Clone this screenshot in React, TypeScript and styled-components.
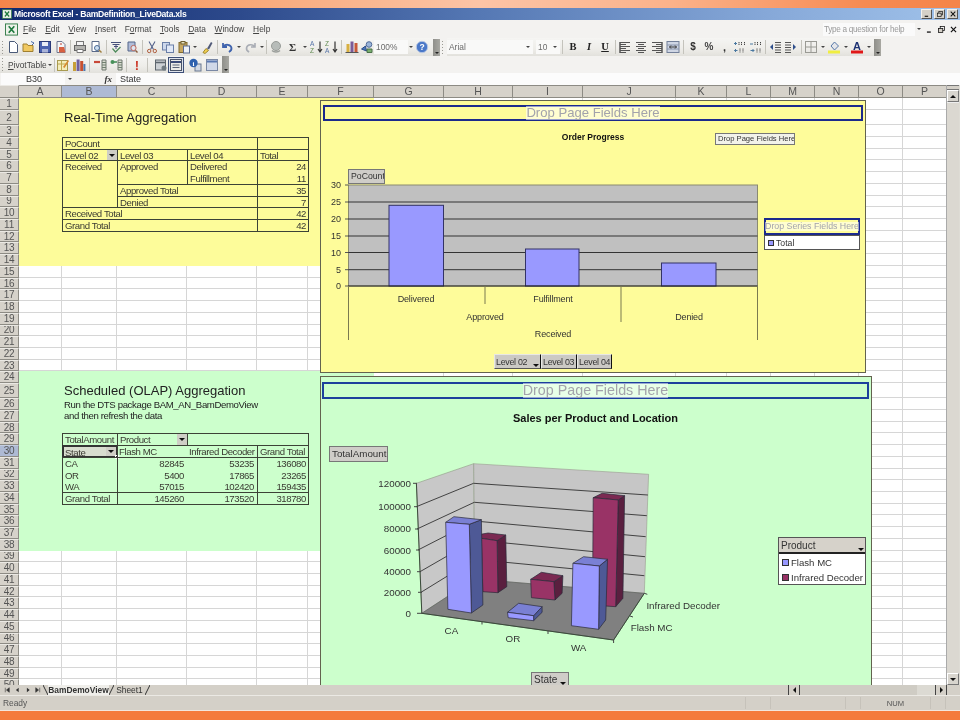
import React from "react";
import styled, { createGlobalStyle } from "styled-components";

const Global = createGlobalStyle`
  html, body { margin: 0; padding: 0; width: 960px; height: 720px; overflow: hidden; background: #f47b3c; }
  #root { width: 960px; height: 720px; }
  * { box-sizing: border-box; }
`;

const FONT = `"Liberation Sans", Arial, sans-serif`;

const colW = [43, 55, 70, 70, 51, 66, 70, 69, 70, 93, 51, 44, 44, 44, 44, 44];
const colN = "ABCDEFGHIJKLMNOP".split("");
const rowH = (n: number) => (n === 1 ? 12 : n === 2 ? 15.3 : n === 25 ? 15.1 : 11.72);
const rows = Array.from({ length: 50 }, (_, i) => i + 1);
const gridCols = `19px ${colW.map((w) => w + "px").join(" ")}`;
const gridRows = `13px ${rows.map((r) => rowH(r) + "px").join(" ")}`;

const Page = styled.div`
  width: 960px; height: 720px; display: flex; flex-direction: column;
  font-family: ${FONT}; color: #222; background: #d4d0c8; overflow: hidden; filter: blur(0.3px);
`;
const TopStrip = styled.div`
  height: 8px; flex: none;
  background: linear-gradient(90deg, #f3854a 0%, #f8a878 25%, #fcc4a6 50%, #fbb28a 70%, #f68b52 90%, #f58449 100%);
`;
const BottomStrip = styled.div`
  height: 10px; flex: none; background: #f47a3b; border-top: 1px solid #f2e6dc;
`;
const TitleBar = styled.div`
  height: 12px; flex: none; display: flex; align-items: center; padding: 0 2px;
  background: linear-gradient(90deg, #10296e 0%, #2d4a8c 25%, #5578b4 50%, #86a8d8 80%, #a0c2ea 100%);
  color: #fff; font-weight: bold; font-size: 8.6px; letter-spacing: -0.27px; gap: 2px;
`;
const TitleText = styled.span`flex: 1; white-space: nowrap;`;
const WinBtn = styled.span`
  width: 11px; height: 10px; flex: none; background: #d4d0c8; display: flex; align-items: center; justify-content: center;
  border: 1px solid; border-color: #f4f2ee #555 #555 #f4f2ee; margin-right: 0;
`;
const MenuBar = styled.div`
  height: 18px; flex: none; display: flex; align-items: center; background: #f3f2f0; padding-left: 5px; font-size: 8.4px; color: #444;
`;
const MenuList = styled.div`display: flex; gap: 8.7px; margin-left: 5px;`;
const Mnemonic = styled.span`text-decoration: underline;`;
const HelpBox = styled.div`
  margin-left: auto; width: 92px; height: 13px; background: #fafafa; color: #9a9a9a; font-size: 8.2px; letter-spacing: -0.3px; line-height: 13px; padding-left: 1px; white-space: nowrap;
`;
const DocBtns = styled.div`display: flex; align-items: center; width: 45px; gap: 0; padding-left: 0;`;
const DocSlot = styled.span`width: 12px; display: flex; justify-content: center;`;
const ToolRow = styled.div<{ $h: number }>`
  height: ${(p) => p.$h}px; flex: none; display: flex; align-items: center; background: #f3f2f0;
`;
const ToolGroup = styled.div`
  height: 100%; display: flex; align-items: center;
  background: linear-gradient(180deg, #f5f5f3 0%, #eeede9 60%, #e2e1dc 100%);
`;
const Gripper = styled.span<{ $w?: number }>`
  width: ${(p) => p.$w ?? 5}px; height: 13px; flex: none;
  background: repeating-linear-gradient(180deg, #9a9a94 0 1px, transparent 1px 3px) 2px 0 / 1px 100% no-repeat;
`;
const Slot = styled.span<{ $w: number }>`
  width: ${(p) => p.$w}px; height: 16px; flex: none; display: flex; align-items: center; justify-content: center;
`;
const Hot = styled(Slot)`
  height: 16px; background: #dfe3ea; border: 1px solid #3d4f78;
`;
const Sep = styled.span<{ $w?: number }>`
  width: ${(p) => p.$w ?? 4}px; height: 14px; flex: none; display: flex; justify-content: center;
  &::after { content: ""; width: 1px; height: 100%; background: #c4c3bc; }
`;
const Caret = styled.span<{ $w?: number }>`
  width: ${(p) => p.$w ?? 8}px; height: 16px; flex: none; display: flex; align-items: center; justify-content: center;
  &::after { content: ""; border: 2px solid transparent; border-top: 2.5px solid #444; border-bottom: 0; }
`;
const Overflow = styled.span<{ $ml?: number }>`
  width: 7px; height: 17px; flex: none; margin-left: ${(p) => p.$ml ?? 0}px; display: flex; align-items: flex-end; justify-content: center; padding-bottom: 2px;
  background: linear-gradient(90deg, #8f8f8a, #a8a8a2); 
  &::after { content: ""; border: 2px solid transparent; border-top: 2.5px solid #222; border-bottom: 0; }
`;
const Field = styled.span<{ $w: number }>`
  width: ${(p) => p.$w}px; height: 14px; flex: none; display: flex; align-items: center; justify-content: space-between; padding: 0 1px 0 2px;
  background: #f9f9f8; color: #6b6b6b; font-size: 8.4px;
`;
const GlyphText = styled.span<{ $c?: string; $s?: number; $serif?: boolean; $b?: boolean; $i?: boolean; $u?: boolean }>`
  font-family: ${(p) => (p.$serif ? `"Liberation Serif", serif` : FONT)};
  font-size: ${(p) => p.$s ?? 10}px; color: ${(p) => p.$c ?? "#333"};
  font-weight: ${(p) => (p.$b ? "bold" : "normal")}; font-style: ${(p) => (p.$i ? "italic" : "normal")};
  text-decoration: ${(p) => (p.$u ? "underline" : "none")}; line-height: 1;
`;
const PivotMenu = styled.span`
  font-size: 8.4px; color: #444; display: flex; align-items: center; width: 46px; padding-left: 3px; white-space: nowrap;
`;
const FormulaBar = styled.div`
  height: 12px; flex: none; display: flex; align-items: center; background: #f3f2f0; font-size: 9px; color: #333;
`;
const NameBox = styled.div`
  width: 64px; height: 12px; background: #fbfbfb; padding-left: 25px; line-height: 12px; margin-left: 1px;
`;
const NameCaret = styled(Caret)`height: 12px; margin-left: 1px;`;
const Fx = styled.span`
  width: 42px; text-align: right; padding-right: 4px; font-family: "Liberation Serif", serif; font-style: italic; font-weight: bold; font-size: 9px;
`;
const FormulaInput = styled.div`
  flex: 1; height: 12px; background: #fcfcfc; padding-left: 4px; line-height: 12px;
`;
const SheetArea = styled.div`flex: 1; display: flex; min-height: 0;`;
const Sheet = styled.div`width: 947px; height: 600px; position: relative; overflow: hidden; background: #fff;`;
const BaseGrid = styled.div`
  display: grid; grid-template-columns: ${gridCols}; grid-template-rows: ${gridRows};
`;
const OverGrid = styled(BaseGrid)`position: absolute; left: 0; top: 0;`;
const Head = styled.div<{ $sel?: boolean }>`
  background: ${(p) => (p.$sel ? "#aebad4" : "#d6d2ca")};
  border-right: 1px solid #8d8b84; border-bottom: 1px solid #8d8b84; border-top: 1px solid ${(p) => (p.$sel ? "#c4cde0" : "#ebe9e4")};
  color: #555; font-size: 10px; letter-spacing: -0.3px; display: flex; align-items: center; justify-content: center; overflow: hidden; line-height: 1;
`;
const ColHead = styled(Head)`font-size: 10.5px; letter-spacing: 0; border-top-color: #8d8b84;`;
const tones = { w: "#fff", y: "#fdfc9a", g: "#ccffcc" };
const Cell = styled.div<{ $t: "w" | "y" | "g" }>`
  background: ${(p) => tones[p.$t]};
  ${(p) => (p.$t === "w" ? "border-right: 1px solid #d6d6d6; border-bottom: 1px solid #d6d6d6;" : "")}
`;
const SheetText = styled.div<{ $c: number; $r: number; $s: number; $ls?: number }>`
  grid-column: ${(p) => p.$c}; grid-row: ${(p) => p.$r + 1}; font-size: ${(p) => p.$s}px; letter-spacing: ${(p) => p.$ls ?? 0}px;
  white-space: nowrap; padding-left: 2px; display: flex; align-items: center; color: #222;
`;
const PBox = styled.div<{ $a: string; $right?: boolean; $sel?: boolean; $plain?: boolean }>`
  grid-area: ${(p) => p.$a}; position: relative; white-space: pre;
  border: ${(p) => (p.$plain ? "0" : p.$sel ? "2px solid #333" : "1px solid #3c4236")};
  margin: 0 ${(p) => (p.$plain ? 0 : -1)}px ${(p) => (p.$plain ? 0 : -1)}px 0;
  padding: ${(p) => (p.$sel ? "0 1px" : p.$plain ? "1px 3px 0 2px" : "0 2px")};
  font-size: 9.6px; letter-spacing: -0.4px; line-height: 11.72px; color: #3a3a32; text-align: ${(p) => (p.$right ? "right" : "left")};
  overflow: visible; ${(p) => (p.$sel ? "background: #d8ddcf;" : "")}
`;
const PDrop = styled.span`
  position: absolute; right: 0; top: 0; bottom: 0; width: 10px; background: #cfcfc6; display: flex; align-items: center; justify-content: center;
  &::after { content: ""; border: 3px solid transparent; border-top: 3.5px solid #111; border-bottom: 0; }
`;
const FillHandle = styled.span`
  position: absolute; right: -3px; bottom: -3px; width: 4px; height: 4px; background: #333; border: 1px solid #fff;
`;
const ChartFrame = styled.div<{ $x: number; $y: number; $w: number; $h: number; $bg: string }>`
  position: absolute; left: ${(p) => p.$x}px; top: ${(p) => p.$y}px; width: ${(p) => p.$w}px; height: ${(p) => p.$h}px;
  background: ${(p) => p.$bg}; border: 1px solid #63634f;
`;
const ChartSvg = styled.svg`display: block; width: 100%; height: 100%;`;
const DropStrip = styled.div<{ $x: number; $y: number; $w: number; $h: number; $s: number; $line: string }>`
  position: absolute; left: ${(p) => p.$x}px; top: ${(p) => p.$y}px; width: ${(p) => p.$w}px; height: ${(p) => p.$h}px;
  border: 2px solid ${(p) => p.$line}; display: flex; align-items: center; justify-content: center;
  font-size: ${(p) => p.$s}px; color: #a3a3ab; white-space: nowrap; line-height: 1;
`;
const DropLabel = styled.span`background: rgba(255, 255, 255, 0.55);`;
const FieldBtn = styled.div<{ $x: number; $y: number; $w: number; $h: number; $s?: number; $bg?: string }>`
  position: absolute; left: ${(p) => p.$x}px; top: ${(p) => p.$y}px; width: ${(p) => p.$w}px; height: ${(p) => p.$h}px;
  background: ${(p) => p.$bg ?? "#cfcdc8"}; font-size: ${(p) => p.$s ?? 8.7}px; color: #333; white-space: nowrap;
  border: 1px solid; border-color: #eeeeea #333 #333 #eeeeea; outline: 1px solid #777; outline-offset: -1px;
  display: flex; align-items: center; justify-content: space-between; padding: 0 1px 0 2px; line-height: 1; overflow: hidden;
`;
const BtnCaret = styled.span`
  flex: none; width: 8px; height: 7px; align-self: flex-end; display: flex; align-items: flex-end; justify-content: center; margin-bottom: 1px;
  &::after { content: ""; border: 3px solid transparent; border-top: 3.5px solid #111; border-bottom: 0; }
`;
const BtnGroup = styled.div<{ $x: number; $y: number }>`
  position: absolute; left: ${(p) => p.$x}px; top: ${(p) => p.$y}px; display: flex; height: 15px;
`;
const GroupBtn = styled.div<{ $w: number }>`
  width: ${(p) => p.$w}px; height: 15px; background: #cbc9c4; font-size: 8.9px; letter-spacing: -0.3px; color: #333; border: 1px solid; border-color: #e8e8e4 #111 #555 #e8e8e4;
  display: flex; align-items: center; justify-content: space-between; padding: 0 0 0 1px; white-space: nowrap; overflow: hidden;
`;
const Legend = styled.div<{ $x: number; $y: number; $w: number }>`
  position: absolute; left: ${(p) => p.$x}px; top: ${(p) => p.$y}px; width: ${(p) => p.$w}px; background: #fff; border: 1px solid #555;
  display: flex; flex-direction: column; color: #333;
`;
const LegendHead = styled.div`
  height: 16px; background: #d6d2ca; border-bottom: 2px solid #222; font-size: 10px; display: flex; align-items: center; justify-content: space-between; padding-left: 2px;
`;
const LegendRow = styled.div<{ $h: number; $s: number }>`
  height: ${(p) => p.$h}px; display: flex; align-items: center; gap: 2px; padding-left: 3px; font-size: ${(p) => p.$s}px; white-space: nowrap;
`;
const Swatch = styled.span<{ $c: string; $z: number }>`
  width: ${(p) => p.$z}px; height: ${(p) => p.$z}px; background: ${(p) => p.$c}; border: 1px solid #333; flex: none;
`;
const VScroll = styled.div`
  flex: 1; height: 600px; display: flex; flex-direction: column; background: #dedcd5; padding-right: 1px; border-left: 1px solid #aaa;
`;
const Splitter = styled.div`height: 5px; background: #d4d0c8; border-top: 1px solid #777; border-bottom: 1px solid #777;`;
const ScrollBtn = styled.div<{ $up?: boolean }>`
  width: 12px; height: 12px; flex: none; background: #d8d5ce; border: 1px solid; border-color: #fff #777 #777 #fff; display: flex; align-items: center; justify-content: center;
  &::after { content: ""; border: 3px solid transparent; ${(p) => (p.$up ? "border-bottom: 3.5px solid #111; border-top: 0;" : "border-top: 3.5px solid #111; border-bottom: 0;")} }
`;
const Thumb = styled.div`flex: 1; background: #dbd8d1; border-top: 1px solid #eee;`;
const TabBar = styled.div`
  height: 11px; flex: none; display: flex; align-items: center; background: #d4d0c8; font-size: 8.4px; border-bottom: 1px solid #ebe9e4;
`;
const TabNav = styled.div`display: flex; width: 43px; padding-left: 2px; gap: 0;`;
const NavBtn = styled.span`width: 10.4px; display: flex; justify-content: center;`;
const Tab = styled.div<{ $active?: boolean; $w: number }>`
  width: ${(p) => p.$w}px; height: 10px; display: flex; align-items: center; justify-content: center; white-space: nowrap;
  font-weight: ${(p) => (p.$active ? "bold" : "normal")}; color: #333; background: ${(p) => (p.$active ? "#efeeea" : "transparent")};
`;
const HScroll = styled.div`margin-left: auto; width: 172px; display: flex; align-items: center; height: 10px;`;
const HBtn = styled.div<{ $left?: boolean }>`
  width: 12px; height: 10px; flex: none; display: flex; align-items: center; justify-content: center; border-left: 1px solid #444; border-right: 1px solid #444;
  &::after { content: ""; border: 3px solid transparent; ${(p) => (p.$left ? "border-right: 3.5px solid #111; border-left: 0;" : "border-left: 3.5px solid #111; border-right: 0;")} }
`;
const HTrack = styled.div<{ $w: number; $bg: string }>`width: ${(p) => p.$w}px; height: 10px; background: ${(p) => p.$bg}; flex: none;`;
const StatusBar = styled.div`
  height: 14px; flex: none; display: flex; align-items: center; background: #d4d0c8; color: #555; font-size: 8.4px; padding-left: 3px;
`;
const StatusCell = styled.span<{ $w: number }>`
  width: ${(p) => p.$w}px; height: 12px; border-left: 1px solid #c6c2ba; flex: none; display: flex; align-items: center; justify-content: center; font-size: 7.6px;
`;
const StatusText = styled.span`flex: 1;`;

const S = ({ children, w = 14, h = 14 }: { children: React.ReactNode; w?: number; h?: number }) => (
  <svg width={w} height={h} viewBox="0 0 14 14" fill="none">{children}</svg>
);
const lines = (ys: number[], x1: number, x2: number, c = "#555") =>
  ys.map((y) => <path key={y} d={`M${x1} ${y}H${x2}`} stroke={c} />);

const icons: Record<string, React.ReactNode> = {
  new: <path d="M3.5 1.5h5l3 3v8h-8z" fill="#fff" stroke="#4a5a78" />,
  open: <><path d="M1 11.5V4h4l1 1.5h5v6z" fill="#f0c860" stroke="#a08030" /><path d="M9 1.5l3 1.5-2 2" stroke="#4a6aa8" /></>,
  save: <><rect x="1.5" y="1.5" width="11" height="11" fill="#4a62b0" stroke="#2a3a78" /><rect x="4" y="2" width="6" height="4" fill="#e8ecf6" /><rect x="4" y="9" width="6" height="3.5" fill="#aab4d8" /></>,
  perm: <><path d="M3 1.5h5l3 3v8H3z" fill="#f6f6f6" stroke="#707890" /><path d="M5 7h5l1.5 5.5H5z" fill="#d86040" /><path d="M6 4h2" stroke="#c04030" /></>,
  print: <><rect x="3.5" y="1.5" width="7" height="4" fill="#f4f4f4" stroke="#777" /><rect x="1.5" y="5.5" width="11" height="5" fill="#b4b4b0" stroke="#666" /><path d="M4 9.5h6v3H4z" fill="#fff" stroke="#777" /></>,
  preview: <><path d="M3 1.5h7v10H3z" fill="#fff" stroke="#5a6a88" /><circle cx="8" cy="8" r="2.5" fill="#cfe0f0" stroke="#4a6a98" /><path d="M10 10l2.5 2.5" stroke="#a08040" strokeWidth="1.4" /></>,
  spell: <><path d="M2 2.5h10M3.5 4.5h7M5 6.5h4" stroke="#46507a" strokeWidth="1.2" /><path d="M7 4v5" stroke="#46507a" /><path d="M3.5 8.5l3 3.5 5-5" stroke="#4d8a5a" strokeWidth="1.2" /></>,
  research: <><path d="M3 2h7v9H3z" fill="#b0bcd8" stroke="#55668a" /><circle cx="8.5" cy="8" r="2.6" fill="#dfe6f2" stroke="#c0685a" /><path d="M10.5 10.5l2 2" stroke="#8a5a3a" strokeWidth="1.4" /></>,
  cut: <><path d="M4 1.5l4.5 8M10 1.5L5.5 9.5" stroke="#52608a" strokeWidth="1.1" /><circle cx="4.2" cy="11" r="1.7" stroke="#b06040" /><circle cx="9.8" cy="11" r="1.7" stroke="#b06040" /></>,
  copy: <><rect x="1.5" y="2.5" width="7" height="7.5" fill="#cdd8ec" stroke="#6a7fa8" /><rect x="5.5" y="5" width="7" height="7.5" fill="#e0e8f6" stroke="#6a7fa8" /></>,
  paste: <><rect x="2" y="2.5" width="8" height="10" fill="#c8a860" stroke="#806a30" /><rect x="4" y="1.5" width="4" height="2.5" fill="#e8e0c0" stroke="#706030" /><rect x="6.5" y="6" width="6" height="7" fill="#eef2f8" stroke="#5a6a90" /></>,
  painter: <><path d="M3 12.5l3-4 2.5 2-3.5 3z" fill="#f0cf50" stroke="#a08830" /><path d="M7 8.5l4-6.5 1.5 1-3.5 6.5z" fill="#505a78" /></>,
  undo: <path d="M3 3v4h4M3.4 6.6c2-2.8 7-2.4 8 1 .5 2-.8 3.5-2.5 4.4" stroke="#3f63ad" strokeWidth="1.8" />,
  redo: <path d="M11 3v4H7M10.6 6.6c-2-2.8-7-2.4-8 1-.5 2 .8 3.5 2.5 4.4" stroke="#a9adb5" strokeWidth="1.6" />,
  link: <><circle cx="7" cy="6" r="4.5" fill="#b7bcb9" stroke="#989c98" /><path d="M3 10.5c2 2 6 2 8 0" stroke="#9a9e9a" strokeWidth="1.6" /></>,
  sortA: <><text x="0" y="6.2" fontSize="6.5" fill="#5573a8" fontFamily="Liberation Sans">A</text><text x="0" y="13" fontSize="6.5" fill="#5f8a50" fontFamily="Liberation Sans">Z</text><path d="M10 1.5v10M8 9l2 3 2-3" stroke="#333" strokeWidth="1.2" /></>,
  sortD: <><text x="0" y="6.2" fontSize="6.5" fill="#5f8a50" fontFamily="Liberation Sans">Z</text><text x="0" y="13" fontSize="6.5" fill="#5573a8" fontFamily="Liberation Sans">A</text><path d="M10 1.5v10M8 9l2 3 2-3" stroke="#333" strokeWidth="1.2" /></>,
  chart: <><rect x="1.5" y="4" width="3" height="8.5" fill="#d8b040" /><rect x="5.5" y="1.5" width="3" height="11" fill="#7a5a98" /><rect x="9.5" y="3" width="3" height="9.5" fill="#c85838" /><path d="M0.5 12.5h13" stroke="#555" /></>,
  drawing: <><path d="M1.5 9l4-3 1 5z" fill="#4a78b8" stroke="#2a4a88" /><circle cx="9" cy="4.5" r="2.8" fill="#9ab4d8" stroke="#506a98" /><path d="M7 9h5v3.5H7z" fill="#7ab070" stroke="#4a7048" /></>,
  help: <><circle cx="7" cy="7" r="5.7" fill="#4a78c8" stroke="#b8c8e4" /><text x="7" y="10" textAnchor="middle" fontSize="8.5" fontWeight="bold" fill="#fff" fontFamily="Liberation Sans">?</text></>,
  wizard: <><rect x="1.5" y="2.5" width="10" height="10" fill="#f4eebc" stroke="#a89a50" /><path d="M2 6h9M5.5 3v9" stroke="#c0a850" /><path d="M7 9l5-7 1 1-4.5 7z" fill="#d88a30" /></>,
  pchart: <><rect x="1" y="4" width="3" height="9" fill="#c8a038" /><rect x="4.6" y="1.5" width="3" height="11.5" fill="#7060a0" /><rect x="8.2" y="3" width="3" height="10" fill="#c85030" /><rect x="11.4" y="6" width="2" height="7" fill="#4a78b0" /></>,
  hide: <><path d="M1 4h6" stroke="#c84838" strokeWidth="2.2" /><path d="M9 2h4v10H9z" fill="#d8dcd0" stroke="#707870" />{lines([4.5, 7, 9.5], 9, 13, "#708070")}</>,
  show: <><circle cx="3.5" cy="4" r="2" fill="#48905a" /><path d="M5 4h3" stroke="#48905a" strokeWidth="1.6" /><path d="M9 2h4v10H9z" fill="#d8dcd0" stroke="#707870" />{lines([4.5, 7, 9.5], 9, 13, "#708070")}</>,
  bang: <text x="7" y="12" textAnchor="middle" fontSize="13" fontWeight="bold" fill="#cc3a2a" fontFamily="Liberation Sans">!</text>,
  settings: <><rect x="1.5" y="2" width="10" height="10" fill="#ccd0d4" stroke="#5e666e" /><path d="M1.5 4.5h10" stroke="#5e666e" strokeWidth="1.5" /><circle cx="10" cy="10" r="2.5" fill="#707a80" /></>,
  table: <><rect x="1.5" y="1.5" width="11" height="11" fill="#eaeae6" stroke="#4a5468" /><path d="M2 4h10" stroke="#3a4a78" strokeWidth="2" /><path d="M3.5 7h7M3.5 9.5h7" stroke="#5a6478" /></>,
  info: <><rect x="7" y="6" width="6" height="7" fill="#d0d8e4" stroke="#6a7890" /><circle cx="5.5" cy="5" r="4.2" fill="#2f62ae" /><text x="5.5" y="7.8" textAnchor="middle" fontSize="7" fontWeight="bold" fill="#fff" fontFamily="Liberation Serif">i</text></>,
  window: <><rect x="1.5" y="1.5" width="11" height="11" fill="#d0d8e8" stroke="#7a88a4" /><path d="M2 3.5h10" stroke="#5a78b0" strokeWidth="2" /></>,
  alignL: <>{lines([2.5, 6.5, 10.5], 2, 12)}{lines([4.5, 8.5, 12.5], 2, 8)}<path d="M2 2v11" stroke="#555" strokeWidth="1.5" /></>,
  alignC: <>{lines([2.5, 6.5, 10.5], 2, 12)}{lines([4.5, 8.5, 12.5], 4, 10)}</>,
  alignR: <>{lines([2.5, 6.5, 10.5], 2, 12)}{lines([4.5, 8.5, 12.5], 6, 12)}<path d="M12 2v11" stroke="#555" strokeWidth="1.5" /></>,
  merge: <><rect x="1" y="1.5" width="12" height="11" fill="#cfd6e4" stroke="#73809a" /><path d="M1 5h12M1 9h12" stroke="#8a96ae" /><path d="M3.5 7h7M3.5 7l1.5-1.5M3.5 7l1.5 1.5M10.5 7L9 5.5M10.5 7L9 8.5" stroke="#333" /></>,
  incDec: <><path d="M1 3.5h3M2.5 2v3" stroke="#4a78a0" /><path d="M6 2v3.5M8.5 2v3.5M11.5 2v3.5" stroke="#444" strokeDasharray="1.2 .6" /><path d="M1.5 10.5h3M1.5 10.5L3 9M1.5 10.5L3 12" stroke="#4a78a0" /><path d="M7 8.5v4M10 8.5v4" stroke="#444" strokeDasharray="1.2 .6" /></>,
  decDec: <><path d="M6 2v3.5M8.5 2v3.5M11.5 2v3.5" stroke="#444" strokeDasharray="1.2 .6" /><path d="M1 4h3" stroke="#4a78a0" /><path d="M5 10.5H1.5M5 10.5L3.5 9M5 10.5L3.5 12" stroke="#4a78a0" /><path d="M8 8.5v4M11 8.5v4" stroke="#444" strokeDasharray="1.2 .6" /></>,
  outdent: <>{lines([2.5, 5, 7.5, 10, 12.5], 7, 13)}<path d="M5 4L2 7l3 3z" fill="#30508c" /></>,
  indent: <>{lines([2.5, 5, 7.5, 10, 12.5], 1, 7)}<path d="M9 4l3 3-3 3z" fill="#30508c" /></>,
  borders: <><rect x="1.5" y="1.5" width="11" height="11" stroke="#9a9a94" /><path d="M7 1.5v11M1.5 7h11" stroke="#9a9a94" /></>,
  fill: <><path d="M4 6l3.5-4 4 4-4 4z" fill="#e4e6ea" stroke="#5678a8" /><rect x="1" y="10.5" width="12" height="3" fill="#f0ee40" /></>,
  fontColor: <><text x="7" y="9.5" textAnchor="middle" fontSize="11" fontWeight="bold" fill="#1e3274" fontFamily="Liberation Sans">A</text><rect x="1" y="10.5" width="12" height="3" fill="#e01818" /></>,
  excel: <><rect x="0.5" y="1" width="13" height="12" fill="#eef2ea" stroke="#2f7a45" /><path d="M4 3.5l6 7M10 3.5l-6 7" stroke="#1f7a3f" strokeWidth="1.8" /></>,
  winMin: <path d="M3 11h6" stroke="#111" strokeWidth="2" />,
  winMax: <><rect x="5" y="2.5" width="6.5" height="6" stroke="#111" strokeWidth="1.2" /><rect x="2.5" y="5.5" width="6.5" height="6" fill="#d4d0c8" stroke="#111" strokeWidth="1.2" /></>,
  winClose: <path d="M3 3l8 8M11 3l-8 8" stroke="#111" strokeWidth="1.8" />,
  first: <path d="M4 3v8M11 3L6 7l5 4z" fill="#333" stroke="#333" />,
  prev: <path d="M10 3L5 7l5 4z" fill="#333" />,
  next: <path d="M5 3l5 4-5 4z" fill="#333" />,
  last: <path d="M10 3v8M3 3l5 4-5 4z" fill="#333" stroke="#333" />,
};

const Tool = ({ n, w = 16, size = 14 }: { n: string; w?: number; size?: number }) => (
  <Slot $w={w}><S w={size} h={size}>{icons[n]}</S></Slot>
);
const Letter = ({ w = 16, ...p }: { w?: number; children: React.ReactNode; $s?: number; $c?: string; $serif?: boolean; $b?: boolean; $i?: boolean; $u?: boolean }) => (
  <Slot $w={w}><GlyphText {...p} /></Slot>
);
const Menu = ({ t, m = 0 }: { t: string; m?: number }) => (
  <span>{t.slice(0, m)}<Mnemonic>{t[m]}</Mnemonic>{t.slice(m + 1)}</span>
);
const Drop = ({ t }: { t: string }) => <DropLabel>{t}</DropLabel>;

const tone = (r: number, c: number): "w" | "y" | "g" => {
  if (c > 5) return "w";
  if (r <= 14) return "y";
  if (r >= 24 && r <= 38) return "g";
  return "w";
};

const area = (c1: string, r1: number, c2: string, r2: number) =>
  `${r1 + 1} / ${colN.indexOf(c1) + 2} / ${r2 + 2} / ${colN.indexOf(c2) + 3}`;

type P = { a: string; t?: string; right?: boolean; plain?: boolean; drop?: boolean; sel?: boolean };
const pivots: P[] = [
  { a: area("B", 4, "D", 4), t: "PoCount" },
  { a: area("E", 4, "E", 4) },
  { a: area("B", 5, "B", 5), t: "Level 02", drop: true },
  { a: area("C", 5, "C", 5), t: "Level 03" },
  { a: area("D", 5, "D", 5), t: "Level 04" },
  { a: area("E", 5, "E", 5), t: "Total" },
  { a: area("B", 6, "B", 9), t: "Received" },
  { a: area("C", 6, "C", 7), t: "Approved" },
  { a: area("D", 6, "D", 7), t: "Delivered\nFulfillment" },
  { a: area("E", 6, "E", 7), t: "24\n11", right: true },
  { a: area("C", 8, "D", 8), t: "Approved Total" },
  { a: area("E", 8, "E", 8), t: "35", right: true },
  { a: area("C", 9, "D", 9), t: "Denied" },
  { a: area("E", 9, "E", 9), t: "7", right: true },
  { a: area("B", 10, "D", 10), t: "Received Total" },
  { a: area("E", 10, "E", 10), t: "42", right: true },
  { a: area("B", 11, "D", 11), t: "Grand Total" },
  { a: area("E", 11, "E", 11), t: "42", right: true },
  { a: area("B", 29, "B", 29), t: "TotalAmount" },
  { a: area("C", 29, "C", 29), t: "Product", drop: true },
  { a: area("D", 29, "E", 29) },
  { a: area("B", 30, "B", 30), t: "State", drop: true, sel: true },
  { a: area("C", 30, "D", 30) },
  { a: area("E", 30, "E", 30), t: "Grand Total" },
  { a: area("B", 31, "B", 33), t: "CA\nOR\nWA" },
  { a: area("C", 31, "D", 33) },
  { a: area("E", 31, "E", 33), t: "136080\n23265\n159435", right: true },
  { a: area("B", 34, "B", 34), t: "Grand Total" },
  { a: area("C", 34, "D", 34) },
  { a: area("E", 34, "E", 34), t: "318780", right: true },
  { a: area("C", 30, "C", 30), t: "Flash MC", plain: true },
  { a: area("D", 30, "D", 30), t: "Infrared Decoder", plain: true },
  { a: area("C", 31, "C", 33), t: "82845\n5400\n57015", right: true, plain: true },
  { a: area("D", 31, "D", 33), t: "53235\n17865\n102420", right: true, plain: true },
  { a: area("C", 34, "C", 34), t: "145260", right: true, plain: true },
  { a: area("D", 34, "D", 34), t: "173520", right: true, plain: true },
];

const AXIS = "#7a7a50";
const Chart1Svg = () => {
  const yT = [[30, 185], [25, 202], [20, 219], [15, 236], [10, 252.5], [5, 269.7], [0, 286]];
  const bars = [[389, 205.3, 54.5], [525.5, 249, 53.5], [661.5, 263, 54.5]];
  const labs: [string, number, number][] = [["Delivered", 416, 299], ["Fulfillment", 553, 299], ["Approved", 485, 317], ["Denied", 689, 317], ["Received", 553, 334]];
  return (
    <ChartSvg viewBox="321 101 544 271" fontFamily="Liberation Sans" fill="#333">
      <text x="593" y="140" textAnchor="middle" fontSize="8.5" fontWeight="bold" fill="#111">Order Progress</text>
      <rect x="348.5" y="185" width="409" height="101" fill="#c0c0c0" stroke="#8a8a70" />
      {yT.slice(1, 6).map(([v, y]) => <path key={v} d={`M348 ${y}H757.5`} stroke="#333" strokeWidth="1" />)}
      {yT.map(([v, y]) => (
        <g key={v}>
          <path d={`M345 ${y}h3.5`} stroke="#555" />
          <text x="341" y={y + 3.2} textAnchor="end" fontSize="9">{v}</text>
        </g>
      ))}
      {bars.map(([x, y, w]) => <rect key={x} x={x} y={y} width={w} height={286 - y} fill="#9999ff" stroke="#333366" />)}
      <path d="M348 286H757.5" stroke="#222" />
      <path d="M348.5 286V340M757.5 286V340M485 286V304M621 286V322" stroke={AXIS} strokeWidth="1" />
      {labs.map(([t, x, y]) => <text key={t} x={x} y={y + 3} textAnchor="middle" fontSize="9" letterSpacing="-0.15">{t}</text>)}
    </ChartSvg>
  );
};

const pts = (a: number[]) => a.join(",");
const BLUE = ["#9999ff", "#7a80d4", "#4e5996"];
const MAR = ["#993366", "#7b2952", "#5a1f3f"];
const Bar3 = ({ f, t, s, c }: { f: number[]; t: number[]; s: number[]; c: string[] }) => (
  <g stroke="#2a2a3a" strokeWidth="0.7">
    <polygon points={pts(s)} fill={c[2]} />
    <polygon points={pts(t)} fill={c[1]} />
    <polygon points={pts(f)} fill={c[0]} />
  </g>
);
const Chart2Svg = () => {
  const grid: number[][] = [
    [416.4, 506.7, 473.6, 483.3, 647.9, 495],
    [417, 529, 474.3, 502.3, 646.8, 515.7],
    [418, 550, 474.6, 521, 645.7, 536.7],
    [420, 571.7, 475, 540, 645, 556.7],
    [421, 592.3, 474.6, 559.3, 644.3, 575.7],
  ];
  const vals: [string, number][] = [["120000", 483], ["100000", 506], ["80000", 528], ["60000", 550], ["40000", 571], ["20000", 592], ["0", 613]];
  const cats: [string, number, number][] = [["CA", 451.4, 630], ["OR", 512.9, 638], ["WA", 578.6, 647]];
  return (
    <ChartSvg viewBox="321 377 550 318" fontFamily="Liberation Sans" fill="#333">
      <text x="595.5" y="421.5" textAnchor="middle" fontSize="11" fontWeight="bold" fill="#111">Sales per Product and Location</text>
      <polygon points="473.6,463.7 648.6,474.3 644.3,593.3 474.3,579" fill="#c6c6c6" stroke="#9a9a90" strokeWidth="0.6" />
      <polygon points="416.4,483.3 473.6,463.7 474.3,579 421.8,613.3" fill="#c8c8c8" stroke="#8f9a84" strokeWidth="0.6" />
      <polygon points="421.8,613.3 474.3,579 644.3,593.3 613.6,640" fill="#808080" stroke="#555" strokeWidth="0.6" />
      {grid.map((g) => <polyline key={g[1]} points={g.join(",")} fill="none" stroke="#333" strokeWidth="0.9" />)}
      <path d="M416.4 483.3L421.8 613.3L613.6 640L644.3 593.3" fill="none" stroke="#3a4a3a" />
      <path d="M417 613.3h5M613.6 640v3M548 631v3M482 621.5v3M630 616l3 1M644.3 593.3l3 1" stroke="#444" fill="none" />
      {[483.3, 506.7, 529, 550, 571.7, 592.3].map((y, i) => <path key={y} d={`M${413 + i} ${y}h4`} stroke="#444" />)}
      <Bar3 c={MAR} f={[481.4, 538.3, 497.1, 540.7, 497.9, 592.7, 482.9, 591.7]} t={[481.4, 538.3, 480.7, 534.3, 488, 533, 505.7, 535, 497.1, 540.7]} s={[497.1, 540.7, 505.7, 535, 506.8, 586.7, 497.9, 592.7]} />
      <Bar3 c={BLUE} f={[445.7, 522.3, 469.3, 524.3, 471.4, 613, 447.9, 609.3]} t={[445.7, 522.3, 453.9, 516.7, 481.4, 519.7, 469.3, 524.3]} s={[469.3, 524.3, 481.4, 519.7, 482.9, 605, 471.4, 613]} />
      <Bar3 c={MAR} f={[530.7, 579.3, 553.9, 581.7, 555, 600, 531.4, 597.7]} t={[530.7, 579.3, 541.4, 572.3, 562.9, 575.7, 553.9, 581.7]} s={[553.9, 581.7, 562.9, 575.7, 562.1, 593.3, 555, 600]} />
      <Bar3 c={BLUE} f={[507.5, 612.3, 533.6, 615.7, 533.6, 620.7, 508.2, 617.7]} t={[507.5, 612.3, 518.6, 603.3, 542.1, 606.7, 533.6, 615.7]} s={[533.6, 615.7, 542.1, 606.7, 542.1, 612.3, 533.6, 620.7]} />
      <Bar3 c={MAR} f={[593.2, 497.7, 618.2, 500, 615.7, 606.7, 592.5, 605]} t={[593.2, 497.7, 602.1, 493.3, 624.6, 495.7, 618.2, 500]} s={[618.2, 500, 624.6, 495.7, 622.9, 598.3, 615.7, 606.7]} />
      <Bar3 c={BLUE} f={[572.9, 563.3, 599.3, 566, 598.6, 629.3, 571.4, 625.7]} t={[572.9, 563.3, 583.6, 556.7, 607.5, 559.3, 599.3, 566]} s={[599.3, 566, 607.5, 559.3, 605.7, 620, 598.6, 629.3]} />
      {vals.map(([t, y]) => <text key={t} x="411" y={y + 3.5} textAnchor="end" fontSize="9.8">{t}</text>)}
      {cats.map(([t, x, y]) => <text key={t} x={x} y={y + 3.5} textAnchor="middle" fontSize="9.8">{t}</text>)}
      <text x="646.4" y="608.7" fontSize="9.8">Infrared Decoder</text>
      <text x="630.7" y="630.7" fontSize="9.8">Flash MC</text>
    </ChartSvg>
  );
};

export default function App() {
  return (
    <Page>
      <Global />
      <TopStrip />
      <TitleBar>
        <S w={10} h={10}>{icons.excel}</S>
        <TitleText>Microsoft Excel - BamDefinition_LiveData.xls</TitleText>
        <WinBtn><S w={8} h={8}>{icons.winMin}</S></WinBtn>
        <WinBtn><S w={8} h={8}>{icons.winMax}</S></WinBtn>
        <WinBtn><S w={8} h={8}>{icons.winClose}</S></WinBtn>
      </TitleBar>
      <MenuBar>
        <S w={13} h={13}>{icons.excel}</S>
        <MenuList>
          <Menu t="File" />
          <Menu t="Edit" />
          <Menu t="View" />
          <Menu t="Insert" />
          <Menu t="Format" m={1} />
          <Menu t="Tools" />
          <Menu t="Data" />
          <Menu t="Window" />
          <Menu t="Help" />
        </MenuList>
        <HelpBox>Type a question for help</HelpBox>
        <DocBtns>
          <Caret $w={8} />
          <DocSlot><S w={9} h={9}>{icons.winMin}</S></DocSlot>
          <DocSlot><S w={9} h={9}>{icons.winMax}</S></DocSlot>
          <DocSlot><S w={9} h={9}>{icons.winClose}</S></DocSlot>
        </DocBtns>
      </MenuBar>
      <ToolRow $h={18}>
        <ToolGroup>
          <Gripper />
          <Tool n="new" /><Tool n="open" /><Tool n="save" /><Tool n="perm" /><Sep $w={3} />
          <Tool n="print" /><Tool n="preview" /><Sep />
          <Tool n="spell" /><Tool n="research" /><Sep />
          <Tool n="cut" /><Tool n="copy" /><Tool n="paste" w={15} /><Caret /><Tool n="painter" /><Sep />
          <Tool n="undo" /><Caret /><Tool n="redo" w={15} /><Caret $w={7} /><Sep $w={3} />
          <Tool n="link" /><Letter w={17} $s={11} $b $serif>Σ</Letter><Caret /><Tool n="sortA" w={15} /><Tool n="sortD" w={15} /><Sep $w={5} />
          <Tool n="chart" /><Tool n="drawing" w={14} />
          <Field $w={34}>100%</Field><Caret $w={6} /><Tool n="help" />
          <Overflow $ml={3} />
        </ToolGroup>
        <Gripper $w={7} />
        <ToolGroup>
          <Field $w={86}>Arial<Caret $w={8} /></Field>
          <Slot $w={3} />
          <Field $w={24}>10<Caret $w={8} /></Field>
          <Sep $w={5} />
          <Letter $b $serif $s={10.5} $c="#222">B</Letter>
          <Letter $i $b $serif $s={10.5} $c="#222">I</Letter>
          <Letter $u $b $serif $s={10.5} $c="#222">U</Letter>
          <Sep />
          <Tool n="alignL" /><Tool n="alignC" /><Tool n="alignR" /><Tool n="merge" /><Sep />
          <Letter $b $s={10} $c="#333">$</Letter><Letter $b $s={10} $c="#444">%</Letter><Letter w={15} $b $s={11}>,</Letter>
          <Tool n="incDec" /><Tool n="decDec" w={15} /><Sep />
          <Tool n="outdent" /><Tool n="indent" /><Sep />
          <Tool n="borders" /><Caret $w={7} /><Tool n="fill" /><Caret $w={7} /><Tool n="fontColor" /><Caret $w={7} />
          <Overflow $ml={2} />
        </ToolGroup>
      </ToolRow>
      <ToolRow $h={17}>
        <ToolGroup>
          <Gripper />
          <PivotMenu><Menu t="PivotTable" /><Caret $w={7} /></PivotMenu>
          <Slot $w={2} /><Sep $w={2} />
          <Tool n="wizard" /><Tool n="pchart" /><Sep />
          <Tool n="hide" w={17} /><Tool n="show" /><Sep $w={4} />
          <Tool n="bang" w={17} /><Sep />
          <Slot $w={4} />
          <Tool n="settings" w={15} />
          <Hot $w={16}><S w={14} h={14}>{icons.table}</S></Hot>
          <Slot $w={3} />
          <Tool n="info" /><Tool n="window" w={17} />
          <Overflow $ml={2} />
        </ToolGroup>
      </ToolRow>
      <FormulaBar>
        <NameBox>B30</NameBox>
        <NameCaret />
        <Fx>fx</Fx>
        <FormulaInput>State</FormulaInput>
      </FormulaBar>
      <SheetArea>
        <Sheet>
          <BaseGrid>
            <Head />
            {colN.map((c) => <ColHead key={c} $sel={c === "B"}>{c}</ColHead>)}
            {rows.map((r) => (
              <React.Fragment key={r}>
                <Head $sel={r === 30}>{r}</Head>
                {colN.map((c, i) => <Cell key={c} $t={tone(r, i)} />)}
              </React.Fragment>
            ))}
          </BaseGrid>
          <OverGrid>
            <SheetText $c={3} $r={2} $s={13}>Real-Time Aggregation</SheetText>
            <SheetText $c={3} $r={25} $s={13}>Scheduled (OLAP) Aggregation</SheetText>
            <SheetText $c={3} $r={26} $s={9.6} $ls={-0.37}>Run the DTS package BAM_AN_BamDemoView</SheetText>
            <SheetText $c={3} $r={27} $s={9.6} $ls={-0.37}>and then refresh the data</SheetText>
            {pivots.map((p, i) => (
              <PBox key={i} $a={p.a} $right={p.right} $plain={p.plain} $sel={p.sel}>
                {p.t}
                {p.drop && <PDrop />}
                {p.sel && <FillHandle />}
              </PBox>
            ))}
          </OverGrid>

          <ChartFrame $x={320} $y={15} $w={546} $h={273} $bg="#fefc9a">
            <Chart1Svg />
            <DropStrip $x={2} $y={4} $w={540} $h={16} $s={13.1} $line="#1c2a8c"><Drop t="Drop Page Fields Here" /></DropStrip>
            <FieldBtn $x={394} $y={32} $w={80} $h={12} $s={7.6} $bg="#f2f2ea">Drop Page Fields Here</FieldBtn>
            <FieldBtn $x={27} $y={68} $w={37} $h={15}>PoCount</FieldBtn>
            <BtnGroup $x={173} $y={253}>
              <GroupBtn $w={47}>Level 02<BtnCaret /></GroupBtn>
              <GroupBtn $w={36}>Level 03</GroupBtn>
              <GroupBtn $w={35}>Level 04</GroupBtn>
            </BtnGroup>
            <DropStrip $x={443} $y={117} $w={96} $h={17} $s={8.8} $line="#1c2a8c"><Drop t="Drop Series Fields Here" /></DropStrip>
            <Legend $x={443} $y={134} $w={96}>
              <LegendRow $h={13} $s={8.7}><Swatch $c="#9999ff" $z={6} />Total</LegendRow>
            </Legend>
          </ChartFrame>

          <ChartFrame $x={320} $y={291} $w={552} $h={320} $bg="#ccffcc">
            <Chart2Svg />
            <DropStrip $x={1} $y={5} $w={547} $h={17} $s={14.3} $line="#1c409c"><Drop t="Drop Page Fields Here" /></DropStrip>
            <FieldBtn $x={8} $y={69} $w={59} $h={16} $s={9.8}>TotalAmount</FieldBtn>
            <FieldBtn $x={210} $y={295} $w={38} $h={15} $s={10}>State<BtnCaret /></FieldBtn>
            <Legend $x={457} $y={160} $w={88}>
              <LegendHead>Product<BtnCaret /></LegendHead>
              <LegendRow $h={16} $s={9.6}><Swatch $c="#9999ff" $z={7} />Flash MC</LegendRow>
              <LegendRow $h={14} $s={9.6}><Swatch $c="#993366" $z={7} />Infrared Decoder</LegendRow>
            </Legend>
          </ChartFrame>
        </Sheet>
        <VScroll>
          <Splitter />
          <ScrollBtn $up />
          <Thumb />
          <ScrollBtn />
        </VScroll>
      </SheetArea>
      <TabBar>
        <TabNav>
          <NavBtn><S w={8} h={8}>{icons.first}</S></NavBtn>
          <NavBtn><S w={8} h={8}>{icons.prev}</S></NavBtn>
          <NavBtn><S w={8} h={8}>{icons.next}</S></NavBtn>
          <NavBtn><S w={8} h={8}>{icons.last}</S></NavBtn>
        </TabNav>
        <svg width="5" height="10" viewBox="0 0 5 10"><path d="M0 0l5 10" stroke="#333" /></svg>
        <Tab $active $w={61}>BamDemoView</Tab>
        <svg width="5" height="10" viewBox="0 0 5 10"><path d="M0 10L5 0" stroke="#333" /></svg>
        <Tab $w={31}>Sheet1</Tab>
        <svg width="5" height="10" viewBox="0 0 5 10"><path d="M0 10L5 0" stroke="#333" /></svg>
        <HScroll>
          <HBtn $left />
          <HTrack $w={117} $bg="#cfccc4" />
          <HTrack $w={18} $bg="#dcdad3" />
          <HBtn />
          <HTrack $w={13} $bg="#d4d0c8" />
        </HScroll>
      </TabBar>
      <StatusBar>
        <StatusText>Ready</StatusText>
        <StatusCell $w={25} />
        <StatusCell $w={75} />
        <StatusCell $w={15} />
        <StatusCell $w={70}>NUM</StatusCell>
        <StatusCell $w={15} />
        <StatusCell $w={15} />
      </StatusBar>
      <BottomStrip />
    </Page>
  );
}
